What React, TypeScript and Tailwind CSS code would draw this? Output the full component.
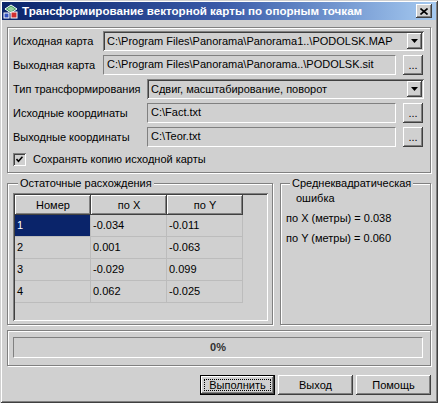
const raised =
  "bg-[#d0d0d0] shadow-[inset_-1px_-1px_0_#404040,inset_1px_1px_0_#fff,inset_-2px_-2px_0_#808080]";
const sunken2 =
  "shadow-[inset_1px_1px_0_#808080,inset_-1px_-1px_0_#fff,inset_2px_2px_0_#404040,inset_-2px_-2px_0_#d0d0d0]";
const etched = "border border-[#808080] shadow-[inset_1px_1px_0_#fff,1px_1px_0_#fff]";
const field = "border border-t-[#808080] border-l-[#808080] border-b-white border-r-white";

function Combo({ value }: { value: string }) {
  return (
    <div className={`flex-1 h-[20px] flex items-center pl-[4px] pr-[2px] ${sunken2}`}>
      <span className="flex-1 truncate">{value}</span>
      <div className={`w-[15px] h-[16px] flex items-center justify-center ${raised}`}>
        <svg width="7" height="4" viewBox="0 0 7 4">
          <path d="M0 0h7L3.5 4z" fill="#000" />
        </svg>
      </div>
    </div>
  );
}

function FileField({ value }: { value: string }) {
  return (
    <div className="flex-1 flex items-center gap-[7px] mr-[1px]">
      <div className={`flex-1 h-[20px] pl-[3px] leading-[16px] ${field}`}>{value}</div>
      <div className={`w-[20px] h-[20px] flex justify-center items-end pb-[4px] leading-none ${raised}`}>
        ...
      </div>
    </div>
  );
}

const rows = [
  { n: "1", x: "-0.034", y: "-0.011" },
  { n: "2", x: "0.001", y: "-0.063" },
  { n: "3", x: "-0.029", y: "0.099" },
  { n: "4", x: "0.062", y: "-0.025" },
];

function Btn({ label, def }: { label: string; def?: boolean }) {
  if (def) {
    return (
      <div className="relative w-[75px] h-[20px] border border-black">
        <div className={`w-full h-full flex items-center justify-center ${raised}`}>{label}</div>
        <div className="absolute inset-[3px] border border-dotted border-black" />
      </div>
    );
  }
  return <div className={`w-[75px] h-[20px] flex items-center justify-center ${raised}`}>{label}</div>;
}

export default function App() {
  return (
    <div className="w-[438px] h-[403px] bg-[#d0d0d0] text-[11px] text-black font-['Liberation_Sans',Arial,sans-serif] p-[2px] shadow-[inset_1px_1px_0_#d0d0d0,inset_-1px_-1px_0_#404040,inset_2px_2px_0_#fff,inset_-2px_-2px_0_#808080]">
      {/* title bar */}
      <div className="h-[18px] flex items-center pl-[1px] pr-[4px] bg-linear-to-r from-[#0a246a] via-[#3a5aa8] to-[#a6caf0]">
        <svg width="16" height="16" viewBox="0 0 16 16">
          <path d="M2 6l6-4 6 4-6 4z" fill="#3a9a5a" stroke="#fff" strokeWidth="1" />
          <path d="M4 6l4-2.5 4 2.5-4 2.5z" fill="#9ad0a0" />
          <rect x="8" y="9" width="6" height="6" fill="#d03030" stroke="#fff" strokeWidth="1" />
          <rect x="1" y="10" width="5" height="5" fill="#3050c0" stroke="#fff" strokeWidth="1" />
        </svg>
        <span className="ml-[3px] flex-1 text-white font-bold text-[11.6px] leading-none whitespace-nowrap">
          Трансформирование векторной карты по опорным точкам
        </span>
        <div className={`w-[16px] h-[14px] flex items-center justify-center ${raised}`}>
          <svg width="8" height="7" viewBox="0 0 8 7">
            <path d="M0.5 0.5l7 6M7.5 0.5l-7 6" stroke="#000" strokeWidth="1.6" />
          </svg>
        </div>
      </div>

      <div className="px-[5px] pt-[7px]">
        {/* top panel */}
        <div className={`h-[146px] pl-[5px] pr-[6px] pt-[3px] flex flex-col gap-[4px] ${etched}`}>
          <div className="flex items-center h-[20px]">
            <span className="w-[90px]">Исходная карта</span>
            <Combo value="C:\Program Files\Panorama\Panorama1..\PODOLSK.MAP" />
          </div>
          <div className="flex items-center h-[20px]">
            <span className="w-[90px]">Выходная карта</span>
            <FileField value="C:\Program Files\Panorama\Panorama..\PODOLSK.sit" />
          </div>
          <div className="flex items-center h-[20px]">
            <span className="w-[134px]">Тип трансформирования</span>
            <Combo value="Сдвиг, масштабирование, поворот" />
          </div>
          <div className="flex items-center h-[20px]">
            <span className="w-[134px]">Исходные координаты</span>
            <FileField value="C:\Fact.txt" />
          </div>
          <div className="flex items-center h-[20px]">
            <span className="w-[134px]">Выходные координаты</span>
            <FileField value="C:\Teor.txt" />
          </div>
          <div className="flex items-center h-[16px]">
            <div className={`w-[13px] h-[13px] flex items-center justify-center ${sunken2}`}>
              <svg width="7" height="7" viewBox="0 0 7 7">
                <path d="M0.5 3l2 2.2 4-4.5" stroke="#000" strokeWidth="1.6" fill="none" />
              </svg>
            </div>
            <span className="ml-[7px]">Сохранять копию исходной карты</span>
          </div>
        </div>

        {/* groups */}
        <div className="flex gap-[7px] mt-[10px] h-[142px]">
          <div className={`relative w-[266px] pl-[5px] pr-[4px] pt-[9px] pb-[3px] flex ${etched}`}>
            <span className="absolute left-[10px] top-[-8px] px-[2px] bg-[#d0d0d0] leading-[15px]">
              Остаточные расхождения
            </span>
            <div className={`flex-1 p-[2px] ${sunken2}`}>
              <div className="flex h-[20px]">
                {["Номер", "по X", "по Y"].map((h) => (
                  <div key={h} className={`w-[76px] flex items-center justify-center ${raised}`}>
                    {h}
                  </div>
                ))}
              </div>
              {rows.map((r, i) => (
                <div key={r.n} className="flex h-[22px]">
                  {[r.n, r.x, r.y].map((v, j) => (
                    <div
                      key={j}
                      className={`w-[76px] flex items-center pl-[2px] border-r border-b border-[#bcbcbc] ${
                        i === 0 && j === 0 ? "bg-[#0a246a] text-white" : ""
                      }`}
                    >
                      {v}
                    </div>
                  ))}
                </div>
              ))}
            </div>
          </div>

          <div className={`relative flex-1 pl-[5px] pt-[4px] ${etched}`}>
            <span className="absolute left-[9px] top-[-8px] px-[2px] bg-[#d0d0d0] leading-[15px]">
              Среднеквадратическая
            </span>
            <div className="leading-[20px] pl-[10px]">ошибка</div>
            <div className="leading-[20px]">по X (метры) = 0.038</div>
            <div className="leading-[20px]">по Y (метры) = 0.060</div>
          </div>
        </div>

        {/* progress */}
        <div className={`mt-[5px] h-[36px] pl-[5px] pr-[7px] pt-[6px] ${etched}`}>
          <div className={`h-[21px] flex items-center justify-center font-bold text-[#303030] ${field}`}>0%</div>
        </div>

        {/* buttons */}
        <div className="flex justify-end gap-[3px] mt-[9px]">
          <Btn label="Выполнить" def />
          <Btn label="Выход" />
          <Btn label="Помощь" />
        </div>
      </div>
    </div>
  );
}
